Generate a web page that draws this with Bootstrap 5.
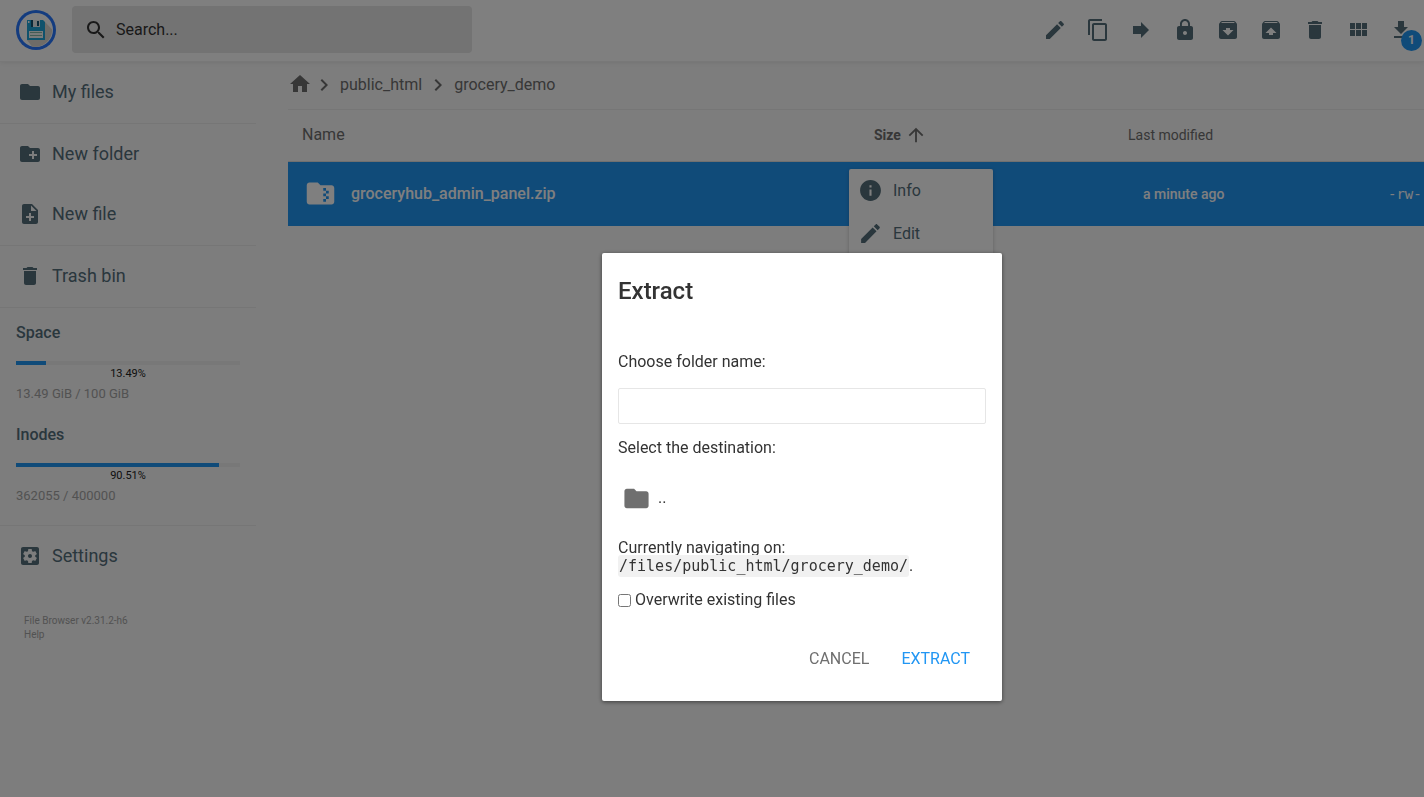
<!DOCTYPE html>
<html lang="en">
<head>
<meta charset="utf-8">
<meta name="viewport" content="width=device-width, initial-scale=1">
<title>File Browser</title>
<link href="https://cdn.jsdelivr.net/npm/bootstrap@5.3.0/dist/css/bootstrap.min.css" rel="stylesheet">
<style>
  :root { --slate: #546e7a; --blue: #2196f3; --line: #ededed; }
  body { font-family: Roboto, "Open Sans", sans-serif; font-size: 16px; line-height: 18px; color: #6f6f6f; background: #fafafa; min-height: 100vh; overflow: hidden; }
  svg { display: block; fill: currentColor; flex: none; }
  .ico { width: 24px; height: 24px; }
  button { background: none; border: 0; padding: 0; color: inherit; text-align: left; }
  a { color: inherit; text-decoration: none; }

  .topbar { height: 62px; padding: 0 1px 2px 16px; background: #fff; border-bottom: 1px solid #f0f0f0; box-shadow: 0 0 5px rgba(0,0,0,.1); }
  .searchbox { width: 400px; height: 47px; background: #e6e6e6; border-radius: 4px; padding: 0 12px; color: #333; }
  .searchbox input { font-size: 16px; color: #333; outline: 0; }
  .searchbox input::placeholder { color: #333; opacity: 1; }
  .tools { width: 390px; color: var(--slate); }
  .tools button { height: 43px; }
  .counter { right: 1px; top: 22px; width: 21px; height: 21px; font-size: 12px; line-height: 21px; font-weight: 700; color: #fff; background: var(--blue); border-radius: 50%; text-align: center; }

  .sidebar { width: 256px; flex: none; color: var(--slate); }
  .navgroup { padding-bottom: 1px; border-bottom: 1px solid var(--line); }
  .navgroup button, .settings { display: flex; align-items: center; gap: 10px; width: 100%; height: 60px; padding-left: 18px; font-size: 18px; }
  .quota { padding: 16px 16px 18px; border-bottom: 1px solid var(--line); }
  .quota h2 { font-size: 16px; line-height: 18px; font-weight: 500; margin: 0 0 19px; }
  .quota .progress { height: 4px; background: #f0f0f0; border-radius: 0; }
  .quota .progress-bar { background: var(--blue); }
  .percent { font-size: 11px; line-height: 18px; color: #222; text-align: center; }
  .amount { font-size: 13px; line-height: 22px; color: #a5a5a5; }
  .amount + h2 { margin-top: 21px; }
  .credits { padding: 28px 24px; font-size: 10px; line-height: 14px; color: #a5a5a5; }

  .crumbs { height: 48px; padding-bottom: 2px; border-bottom: 1px solid var(--line); }
  .crumbs .home { padding-bottom: 2px; }
  .listing { table-layout: fixed; width: 100%; }
  .listing th { height: 51px; padding: 0 14px; font-size: 14px; font-weight: 400; border-bottom: 1px solid #e0e0e0; }
  .listing th.wide { font-size: 16px; }
  .listing th b { font-weight: 700; }
  .listing td { height: 65px; padding: 0 14px; font-size: 14px; font-weight: 500; color: #fff; background: var(--blue); white-space: nowrap; }
  .listing .fname { font-size: 16px; padding-left: 12px; }
  .listing .fname span { gap: 14px; }
  .listing .when { padding-left: 29px; }
  .listing .perm { padding-right: 0; font-family: "DejaVu Sans Mono", monospace; font-weight: 400; }
  .col-size { width: 254px; } .col-date { width: 260px; } .col-perm { width: 50px; }
  .zip { width: 33px; height: 33px; }
  .sort { width: 22px; height: 22px; }
  .ctxmenu { left: 561px; top: 107px; width: 144px; background: #fff; border-radius: 2px; box-shadow: 0 1px 4px rgba(0,0,0,.2); color: var(--slate); }
  .ctxmenu button { height: 43px; padding-left: 9px; gap: 10px; }
  .ctxmenu .ico { width: 25px; height: 25px; }

  .modal-dialog { width: 400px; max-width: 100%; margin: 253px 0 0 calc(50% - 110px); }
  .modal-content { border: 0; border-radius: 2px; padding: 16px; color: #333; box-shadow: 0 1px 4px rgba(0,0,0,.5); }
  .modal-content h1 { font-size: 24px; line-height: 28px; font-weight: 500; margin: 8px 0 48px; }
  .modal-content input[type=text] { height: 36px; border: 1px solid #e6e6e6; border-radius: 2px; margin: 17px 0 15px; }
  .folder { height: 48px; padding-left: 4px; gap: 7px; margin: 17px 0; }
  .folder svg { width: 29px; height: 29px; color: #6f6f6f; }
  .where { margin: 0 0 16px; }
  .where code { font-family: "DejaVu Sans Mono", monospace; font-size: 15px; color: #333; background: #f1f1f1; padding: 2px 1px; border-radius: 3px; }
  .overwrite { gap: 4px; }
  .overwrite input { width: 13px; height: 13px; margin: 0; }
  .actions { margin-top: 32px; padding: 0 16px 8px; gap: 32px; }
  .actions button { height: 36px; color: #6f6f6f; }
  .actions .go { color: var(--blue); }
</style>
</head>
<body>
<header class="topbar d-flex align-items-center">
  <svg width="40" height="40" viewBox="0 0 40 40" role="img" aria-label="File Browser">
    <circle cx="20" cy="20" r="20" fill="#2979ff"/><circle cx="20" cy="20" r="17" fill="#fff"/>
    <path d="M29 12l7.200 7.500A17 17 0 0 1 16 36.500L11 30z" fill="#ddd8d0"/>
    <path d="M11 10h16l2 2v18H11z" fill="#1fa5d8"/>
    <path d="M15 10h9v7h-9z" fill="#e8eef0"/><path d="M15 10h2v7h-2zM21 11h2v5h-2z" fill="#14516f"/>
    <path d="M13 21h14v7H13z" fill="#f4f6f7"/><path d="M14 22h12v1H14zM14 25h12v1H14z" fill="#8ba"/>
    <path d="M12 11h1.500v2H12z" fill="#fff"/>
  </svg>
  <label class="searchbox d-flex align-items-center ms-3">
    <svg class="ico" viewBox="0 0 24 24"><path d="M15.500 14h-.79l-.28-.27C15.410 12.590 16 11.110 16 9.500 16 5.910 13.090 3 9.500 3S3 5.910 3 9.500 5.910 16 9.500 16c1.610 0 3.090-.59 4.230-1.570l.27.28v.79l5 4.990L20.490 19l-4.990-5zm-6 0C7.010 14 5 11.990 5 9.500S7.010 5 9.500 5 14 7.010 14 9.500 11.990 14 9.500 14z"/></svg>
    <input class="border-0 bg-transparent flex-fill p-0 ms-2" type="text" placeholder="Search..." aria-label="Search">
  </label>
  <div class="tools d-flex ms-auto">
    <button class="flex-fill d-flex align-items-center justify-content-center" aria-label="Rename"><svg class="ico" viewBox="0 0 24 24"><path d="M3 17.250V21h3.750L17.810 9.940l-3.750-3.750L3 17.250zM20.710 7.040c.39-.39.39-1.020 0-1.410l-2.340-2.340c-.39-.39-1.020-.39-1.410 0l-1.830 1.830 3.750 3.750 1.830-1.830z"/></svg></button>
    <button class="flex-fill d-flex align-items-center justify-content-center" aria-label="Copy"><svg class="ico" viewBox="0 0 24 24"><path d="M16 1H4c-1.100 0-2 .9-2 2v14h2V3h12V1zm3 4H8c-1.100 0-2 .9-2 2v14c0 1.100.9 2 2 2h11c1.100 0 2-.9 2-2V7c0-1.100-.9-2-2-2zm0 16H8V7h11v14z"/></svg></button>
    <button class="flex-fill d-flex align-items-center justify-content-center" aria-label="Move"><svg class="ico" viewBox="0 0 24 24"><path d="M12 8V4l8 8-8 8v-4H4V8z"/></svg></button>
    <button class="flex-fill d-flex align-items-center justify-content-center" aria-label="Permissions"><svg class="ico" viewBox="0 0 24 24"><path d="M18 8h-1V6c0-2.760-2.240-5-5-5S7 3.240 7 6v2H6c-1.100 0-2 .9-2 2v10c0 1.100.9 2 2 2h12c1.100 0 2-.9 2-2V10c0-1.100-.9-2-2-2zm-6 9c-1.100 0-2-.9-2-2s.9-2 2-2 2 .9 2 2-.9 2-2 2zm3.100-9H8.900V6c0-1.710 1.390-3.100 3.100-3.100 1.710 0 3.100 1.390 3.100 3.100v2z"/></svg></button>
    <button class="flex-fill d-flex align-items-center justify-content-center" aria-label="Archive"><svg class="ico" viewBox="0 0 24 24"><path d="M20.540 5.230l-1.390-1.680C18.880 3.210 18.470 3 18 3H6c-.47 0-.88.21-1.160.55L3.460 5.230C3.170 5.570 3 6.020 3 6.500V19c0 1.100.9 2 2 2h14c1.100 0 2-.9 2-2V6.500c0-.48-.17-.93-.46-1.270zM12 17.500L6.500 12H10v-2h4v2h3.500L12 17.500zM5.120 5l.81-1h12l.94 1H5.120z"/></svg></button>
    <button class="flex-fill d-flex align-items-center justify-content-center" aria-label="Unarchive"><svg class="ico" viewBox="0 0 24 24"><path d="M20.540 5.230l-1.390-1.680C18.880 3.210 18.470 3 18 3H6c-.47 0-.88.21-1.160.55L3.460 5.230C3.170 5.570 3 6.020 3 6.500V19c0 1.100.9 2 2 2h14c1.100 0 2-.9 2-2V6.500c0-.48-.17-.93-.46-1.270zM12 9.500l5.500 5.500H14v2h-4v-2H6.500L12 9.500zM5.120 5l.81-1h12l.94 1H5.120z"/></svg></button>
    <button class="flex-fill d-flex align-items-center justify-content-center" aria-label="Delete"><svg class="ico" viewBox="0 0 24 24"><path d="M6 19c0 1.100.9 2 2 2h8c1.100 0 2-.9 2-2V7H6v12zM19 4h-3.500l-1-1h-5l-1 1H5v2h14V4z"/></svg></button>
    <button class="flex-fill d-flex align-items-center justify-content-center" aria-label="Switch view"><svg class="ico" viewBox="0 0 24 24"><path d="M4 11h5V5H4v6zm0 7h5v-6H4v6zm6 0h5v-6h-5v6zm6 0h5v-6h-5v6zm-6-7h5V5h-5v6zm6-6v6h5V5h-5z"/></svg></button>
    <button class="flex-fill d-flex align-items-center justify-content-center position-relative" aria-label="Download"><svg class="ico" viewBox="0 0 24 24"><path d="M19 9h-4V3H9v6H5l7 7 7-7zM5 18v2h14v-2H5z"/></svg><span class="counter position-absolute">1</span></button>
  </div>
</header>

<div class="d-flex">
  <nav class="sidebar">
    <div class="navgroup">
      <button><svg class="ico" viewBox="0 0 24 24"><path d="M10 4H4c-1.100 0-1.990.9-1.990 2L2 18c0 1.100.9 2 2 2h16c1.100 0 2-.9 2-2V8c0-1.100-.9-2-2-2h-8l-2-2z"/></svg>My files</button>
    </div>
    <div class="navgroup">
      <button><svg class="ico" viewBox="0 0 24 24"><path d="M20 6h-8l-2-2H4c-1.110 0-1.990.89-1.990 2L2 18c0 1.110.89 2 2 2h16c1.110 0 2-.89 2-2V8c0-1.110-.89-2-2-2zm-1 8h-3v3h-2v-3h-3v-2h3V9h2v3h3v2z"/></svg>New folder</button>
      <button><svg class="ico" viewBox="0 0 24 24"><path d="M14 2H6c-1.100 0-1.990.9-1.990 2L4 20c0 1.100.89 2 1.990 2H18c1.100 0 2-.9 2-2V8l-6-6zm2 14h-3v3h-2v-3H8v-2h3v-3h2v3h3v2zm-3-7V3.500L18.500 9H13z"/></svg>New file</button>
    </div>
    <div class="navgroup">
      <button><svg class="ico" viewBox="0 0 24 24"><path d="M6 19c0 1.100.9 2 2 2h8c1.100 0 2-.9 2-2V7H6v12zM19 4h-3.500l-1-1h-5l-1 1H5v2h14V4z"/></svg>Trash bin</button>
    </div>
    <div class="quota">
      <h2>Space</h2>
      <div class="progress" role="progressbar" aria-label="Space" aria-valuenow="13.49" aria-valuemin="0" aria-valuemax="100"><div class="progress-bar" style="width:13.49%"></div></div>
      <div class="percent">13.49%</div>
      <div class="amount">13.49 GiB / 100 GiB</div>
      <h2>Inodes</h2>
      <div class="progress" role="progressbar" aria-label="Inodes" aria-valuenow="90.51" aria-valuemin="0" aria-valuemax="100"><div class="progress-bar" style="width:90.51%"></div></div>
      <div class="percent">90.51%</div>
      <div class="amount">362055 / 400000</div>
    </div>
    <button class="settings"><svg class="ico" viewBox="0 0 24 24"><path d="M12 10c-1.100 0-2 .9-2 2s.9 2 2 2 2-.9 2-2-.9-2-2-2zm7-7H5c-1.110 0-2 .9-2 2v14c0 1.100.89 2 2 2h14c1.110 0 2-.9 2-2V5c0-1.100-.89-2-2-2zm-1.750 9c0 .23-.02.46-.05.68l1.480 1.160c.13.11.17.3.08.45l-1.400 2.420c-.09.15-.27.21-.43.15l-1.740-.7c-.36.28-.76.51-1.180.69l-.26 1.850c-.03.17-.18.3-.35.3h-2.800c-.17 0-.32-.13-.35-.29l-.26-1.850c-.43-.18-.82-.41-1.180-.69l-1.740.7c-.16.06-.34 0-.43-.15l-1.400-2.420c-.09-.15-.05-.34.08-.45l1.480-1.160c-.03-.23-.05-.46-.05-.69 0-.23.02-.46.05-.68l-1.480-1.160c-.13-.11-.17-.3-.08-.45l1.400-2.420c.09-.15.27-.21.43-.15l1.740.7c.36-.28.76-.51 1.180-.69l.26-1.850c.03-.17.18-.3.35-.3h2.800c.17 0 .32.13.35.29l.26 1.850c.43.18.82.41 1.180.69l1.740-.7c.16-.06.34 0 .43.15l1.400 2.420c.09.15.05.34-.08.45l-1.480 1.160c.03.23.05.46.05.69z"/></svg>Settings</button>
    <div class="credits"><a class="d-block" href="#">File Browser v2.31.2-h6</a><a class="d-block" href="#">Help</a></div>
  </nav>

  <main class="flex-fill ms-4 ps-2">
    <div class="position-relative">
      <nav class="crumbs d-flex align-items-center" aria-label="Breadcrumb">
        <a class="home" href="#" aria-label="Home"><svg class="ico" viewBox="0 0 24 24"><path d="M10 20v-6h4v6h5v-8h3L12 3 2 12h3v8z"/></svg></a>
        <svg class="ico" viewBox="0 0 24 24"><path d="M10 6L8.590 7.410 13.170 12l-4.580 4.590L10 18l6-6z"/></svg>
        <a href="#" class="mx-1 pe-0">public_html</a>
        <svg class="ico" viewBox="0 0 24 24"><path d="M10 6L8.590 7.410 13.170 12l-4.580 4.590L10 18l6-6z"/></svg>
        <a href="#" class="mx-1">grocery_demo</a>
      </nav>
      <table class="listing">
        <colgroup><col><col class="col-size"><col class="col-date"><col class="col-perm"></colgroup>
        <thead><tr>
          <th class="wide">Name</th>
          <th><span class="d-flex align-items-center gap-1"><b>Size</b><svg class="sort" viewBox="0 0 24 24"><path d="M4 12l1.410 1.410L11 7.830V20h2V7.830l5.580 5.590L20 12l-8-8-8 8z"/></svg></span></th>
          <th>Last modified</th><th></th>
        </tr></thead>
        <tbody><tr>
          <td class="fname"><span class="d-flex align-items-center ps-1"><svg class="zip" viewBox="0 0 24 24"><path d="M20 6h-8l-2-2H4c-1.100 0-2 .9-2 2v12c0 1.100.9 2 2 2h16c1.100 0 2-.9 2-2V8c0-1.100-.9-2-2-2zm-2 6h-2v2h2v2h-2v2h-2v-2h2v-2h-2v-2h2v-2h-2V8h2v2h2v2z"/></svg>groceryhub_admin_panel.zip</span></td>
          <td></td><td class="when">a minute ago</td><td class="perm">-rw-</td>
        </tr></tbody>
      </table>
      <div class="ctxmenu position-absolute">
        <button class="d-flex align-items-center w-100"><svg class="ico" viewBox="0 0 24 24"><path d="M12 2C6.480 2 2 6.480 2 12s4.480 10 10 10 10-4.480 10-10S17.520 2 12 2zm1 15h-2v-6h2v6zm0-8h-2V7h2v2z"/></svg>Info</button>
        <button class="d-flex align-items-center w-100"><svg class="ico" viewBox="0 0 24 24"><path d="M3 17.250V21h3.750L17.810 9.940l-3.750-3.750L3 17.250zM20.710 7.040c.39-.39.39-1.020 0-1.410l-2.340-2.340c-.39-.39-1.020-.39-1.410 0l-1.830 1.830 3.750 3.750 1.830-1.830z"/></svg>Edit</button>
      </div>
    </div>
  </main>
</div>

<div class="modal-backdrop show"></div>
<div class="modal d-block" role="dialog" aria-modal="true" aria-labelledby="extractTitle">
  <div class="modal-dialog">
    <form class="modal-content">
      <h1 id="extractTitle">Extract</h1>
      <label for="folderName">Choose folder name:</label>
      <input class="w-100 px-2" type="text" id="folderName">
      <div>Select the destination:</div>
      <button type="button" class="folder d-flex align-items-center"><svg viewBox="0 0 24 24"><path d="M10 4H4c-1.100 0-1.990.9-1.990 2L2 18c0 1.100.9 2 2 2h16c1.100 0 2-.9 2-2V8c0-1.100-.9-2-2-2h-8l-2-2z"/></svg>..</button>
      <p class="where">Currently navigating on: <code>/files/public_html/grocery_demo/</code>.</p>
      <label class="overwrite d-flex align-items-center"><input type="checkbox">Overwrite existing files</label>
      <div class="actions d-flex justify-content-end">
        <button type="button">CANCEL</button>
        <button type="button" class="go">EXTRACT</button>
      </div>
    </form>
  </div>
</div>
<script src="https://cdn.jsdelivr.net/npm/bootstrap@5.3.0/dist/js/bootstrap.bundle.min.js"></script>
</body>
</html>
